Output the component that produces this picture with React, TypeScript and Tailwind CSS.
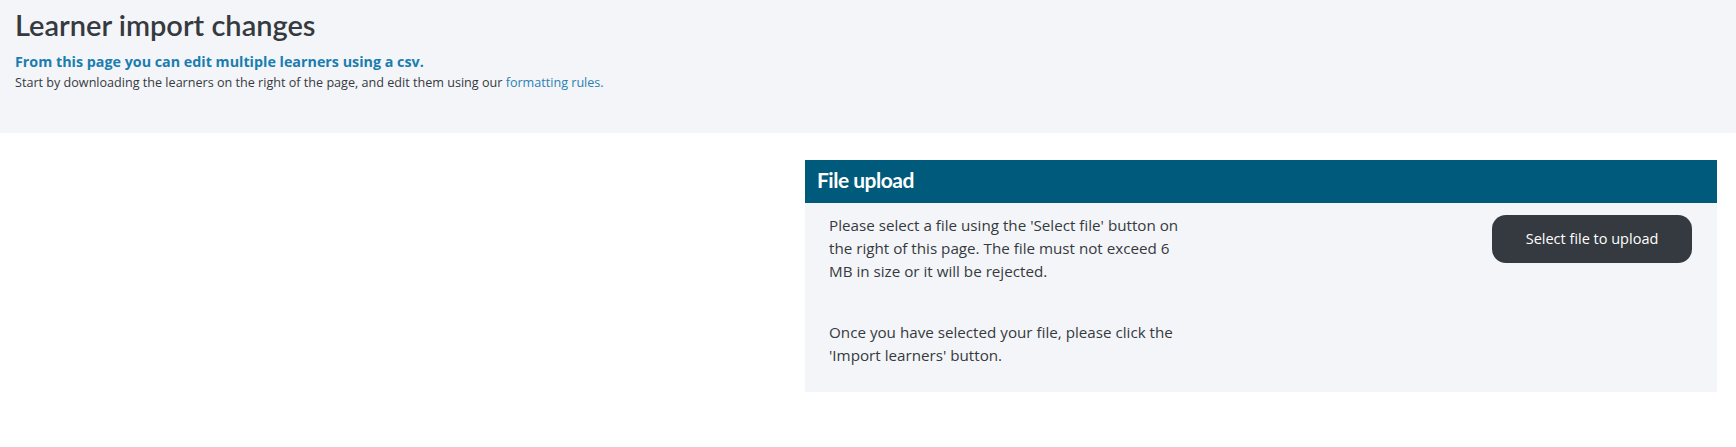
import React from "react";

export default function App() {
  return (
    <div className="w-[1736px] h-[447px] bg-white font-['Open_Sans',sans-serif] text-[#343a40]">
      <div className="h-[133px] bg-[#f4f5f8] px-[15px] pt-[7px]">
        <h1 className="font-['Lato',sans-serif] text-[29px] leading-[36px] font-semibold text-[#343a40]">
          Learner import changes
        </h1>
        <p className="mt-[9px] text-[14.3px] leading-[20px] font-bold text-[#1a7db0]">
          From this page you can edit multiple learners using a csv.
        </p>
        <p className="mt-[3px] text-[12.6px] leading-[16px] text-[#343a40]">
          Start by downloading the learners on the right of the page, and edit them using our{" "}
          <a className="text-[#2a7fb5]" href="#">formatting rules.</a>
        </p>
      </div>
      <div className="flex pt-[27px] pr-[19px]">
        <div className="w-[805px] shrink-0" />
        <div className="flex-1">
          <div className="h-[43px] bg-[#005a7c] px-[12px] pt-[7px]">
            <h2 className="font-['Lato',sans-serif] text-[21px] leading-[26px] font-bold text-white tracking-[-0.5px]">
              File upload
            </h2>
          </div>
          <div className="flex items-start justify-between bg-[#f4f5f9] pl-[24px] pr-[25px] pt-[11px] pb-[25px]">
            <div className="text-[15.2px] leading-[23px] text-[#343a40]">
              <p>
                Please select a file using the 'Select file' button on
                <br />
                the right of this page. The file must not exceed 6
                <br />
                MB in size or it will be rejected.
              </p>
              <p className="mt-[38px]">
                Once you have selected your file, please click the
                <br />
                'Import learners' button.
              </p>
            </div>
            <button className="mt-[1px] w-[200px] h-[48px] rounded-[14px] bg-[#343a40] text-white text-[14.5px] leading-[20px] font-medium">
              Select file to upload
            </button>
          </div>
        </div>
      </div>
    </div>
  );
}
